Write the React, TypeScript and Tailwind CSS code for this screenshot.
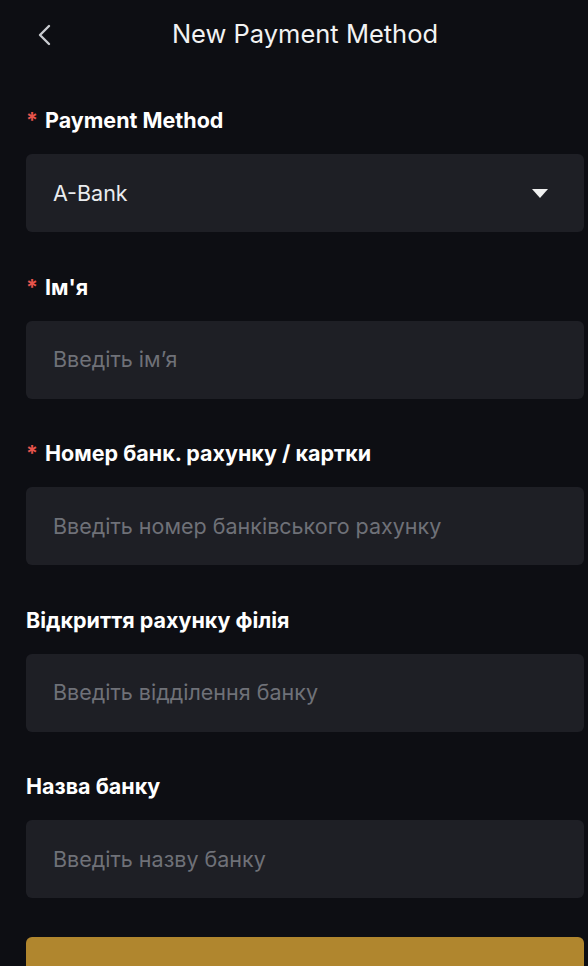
import React from 'react';

interface FieldProps {
  label: string;
  required?: boolean;
  placeholder?: string;
  value?: string;
  select?: boolean;
}

const Field: React.FC<FieldProps> = ({ label, required, placeholder, value, select }) => (
  <div className="flex flex-col mb-[40.5px]">
    <div className="flex items-center h-[28px] text-[21.5px] font-bold text-white leading-[28px]">
      {required && <span className="text-[#e8544c] mr-[7px]">*</span>}
      <span>{label}</span>
    </div>
    <div className="mt-[20px] h-[78px] rounded-[6px] bg-[#1e1f25] flex items-center justify-between pl-[27px] pr-[36px]">
      {value ? (
        <span className="text-[21.5px] text-[#eaecef]">{value}</span>
      ) : (
        <span className="text-[21.5px] text-[#6f7178]">{placeholder}</span>
      )}
      {select && (
        <svg width="16" height="9" viewBox="0 0 16 9">
          <path d="M0 0 H16 L8 9 Z" fill="#f0f0f0" />
        </svg>
      )}
    </div>
  </div>
);

export default function App() {
  return (
    <div
      className="min-h-screen w-full bg-[#0d0e13] overflow-hidden"
      style={{ fontFamily: '"Inter", "Noto Sans", sans-serif' }}
    >
      <header className="relative h-[68px] flex items-center justify-center">
        <button className="absolute left-[36px] top-[22px] text-[#c9cbd0]">
          <svg width="18" height="26" viewBox="0 0 18 26" fill="none">
            <path d="M13 4 L4 13 L13 22" stroke="currentColor" strokeWidth="2.4" strokeLinecap="round" strokeLinejoin="round" />
          </svg>
        </button>
        <h1 className="text-[25.5px] text-[#f2f2f2] font-normal ml-[22px]">New Payment Method</h1>
      </header>

      <main className="pl-[26px] pr-[4px] pt-[38px]">
        <Field label="Payment Method" required value="A-Bank" select />
        <Field label="Ім'я" required placeholder="Введіть ім’я" />
        <Field label="Номер банк. рахунку / картки" required placeholder="Введіть номер банківського рахунку" />
        <Field label="Відкриття рахунку філія" placeholder="Введіть відділення банку" />
        <Field label="Назва банку" placeholder="Введіть назву банку" />
        <button className="-mt-[2px] w-full h-[64px] rounded-[6px] bg-[#b0862e]" />
      </main>
    </div>
  );
}
